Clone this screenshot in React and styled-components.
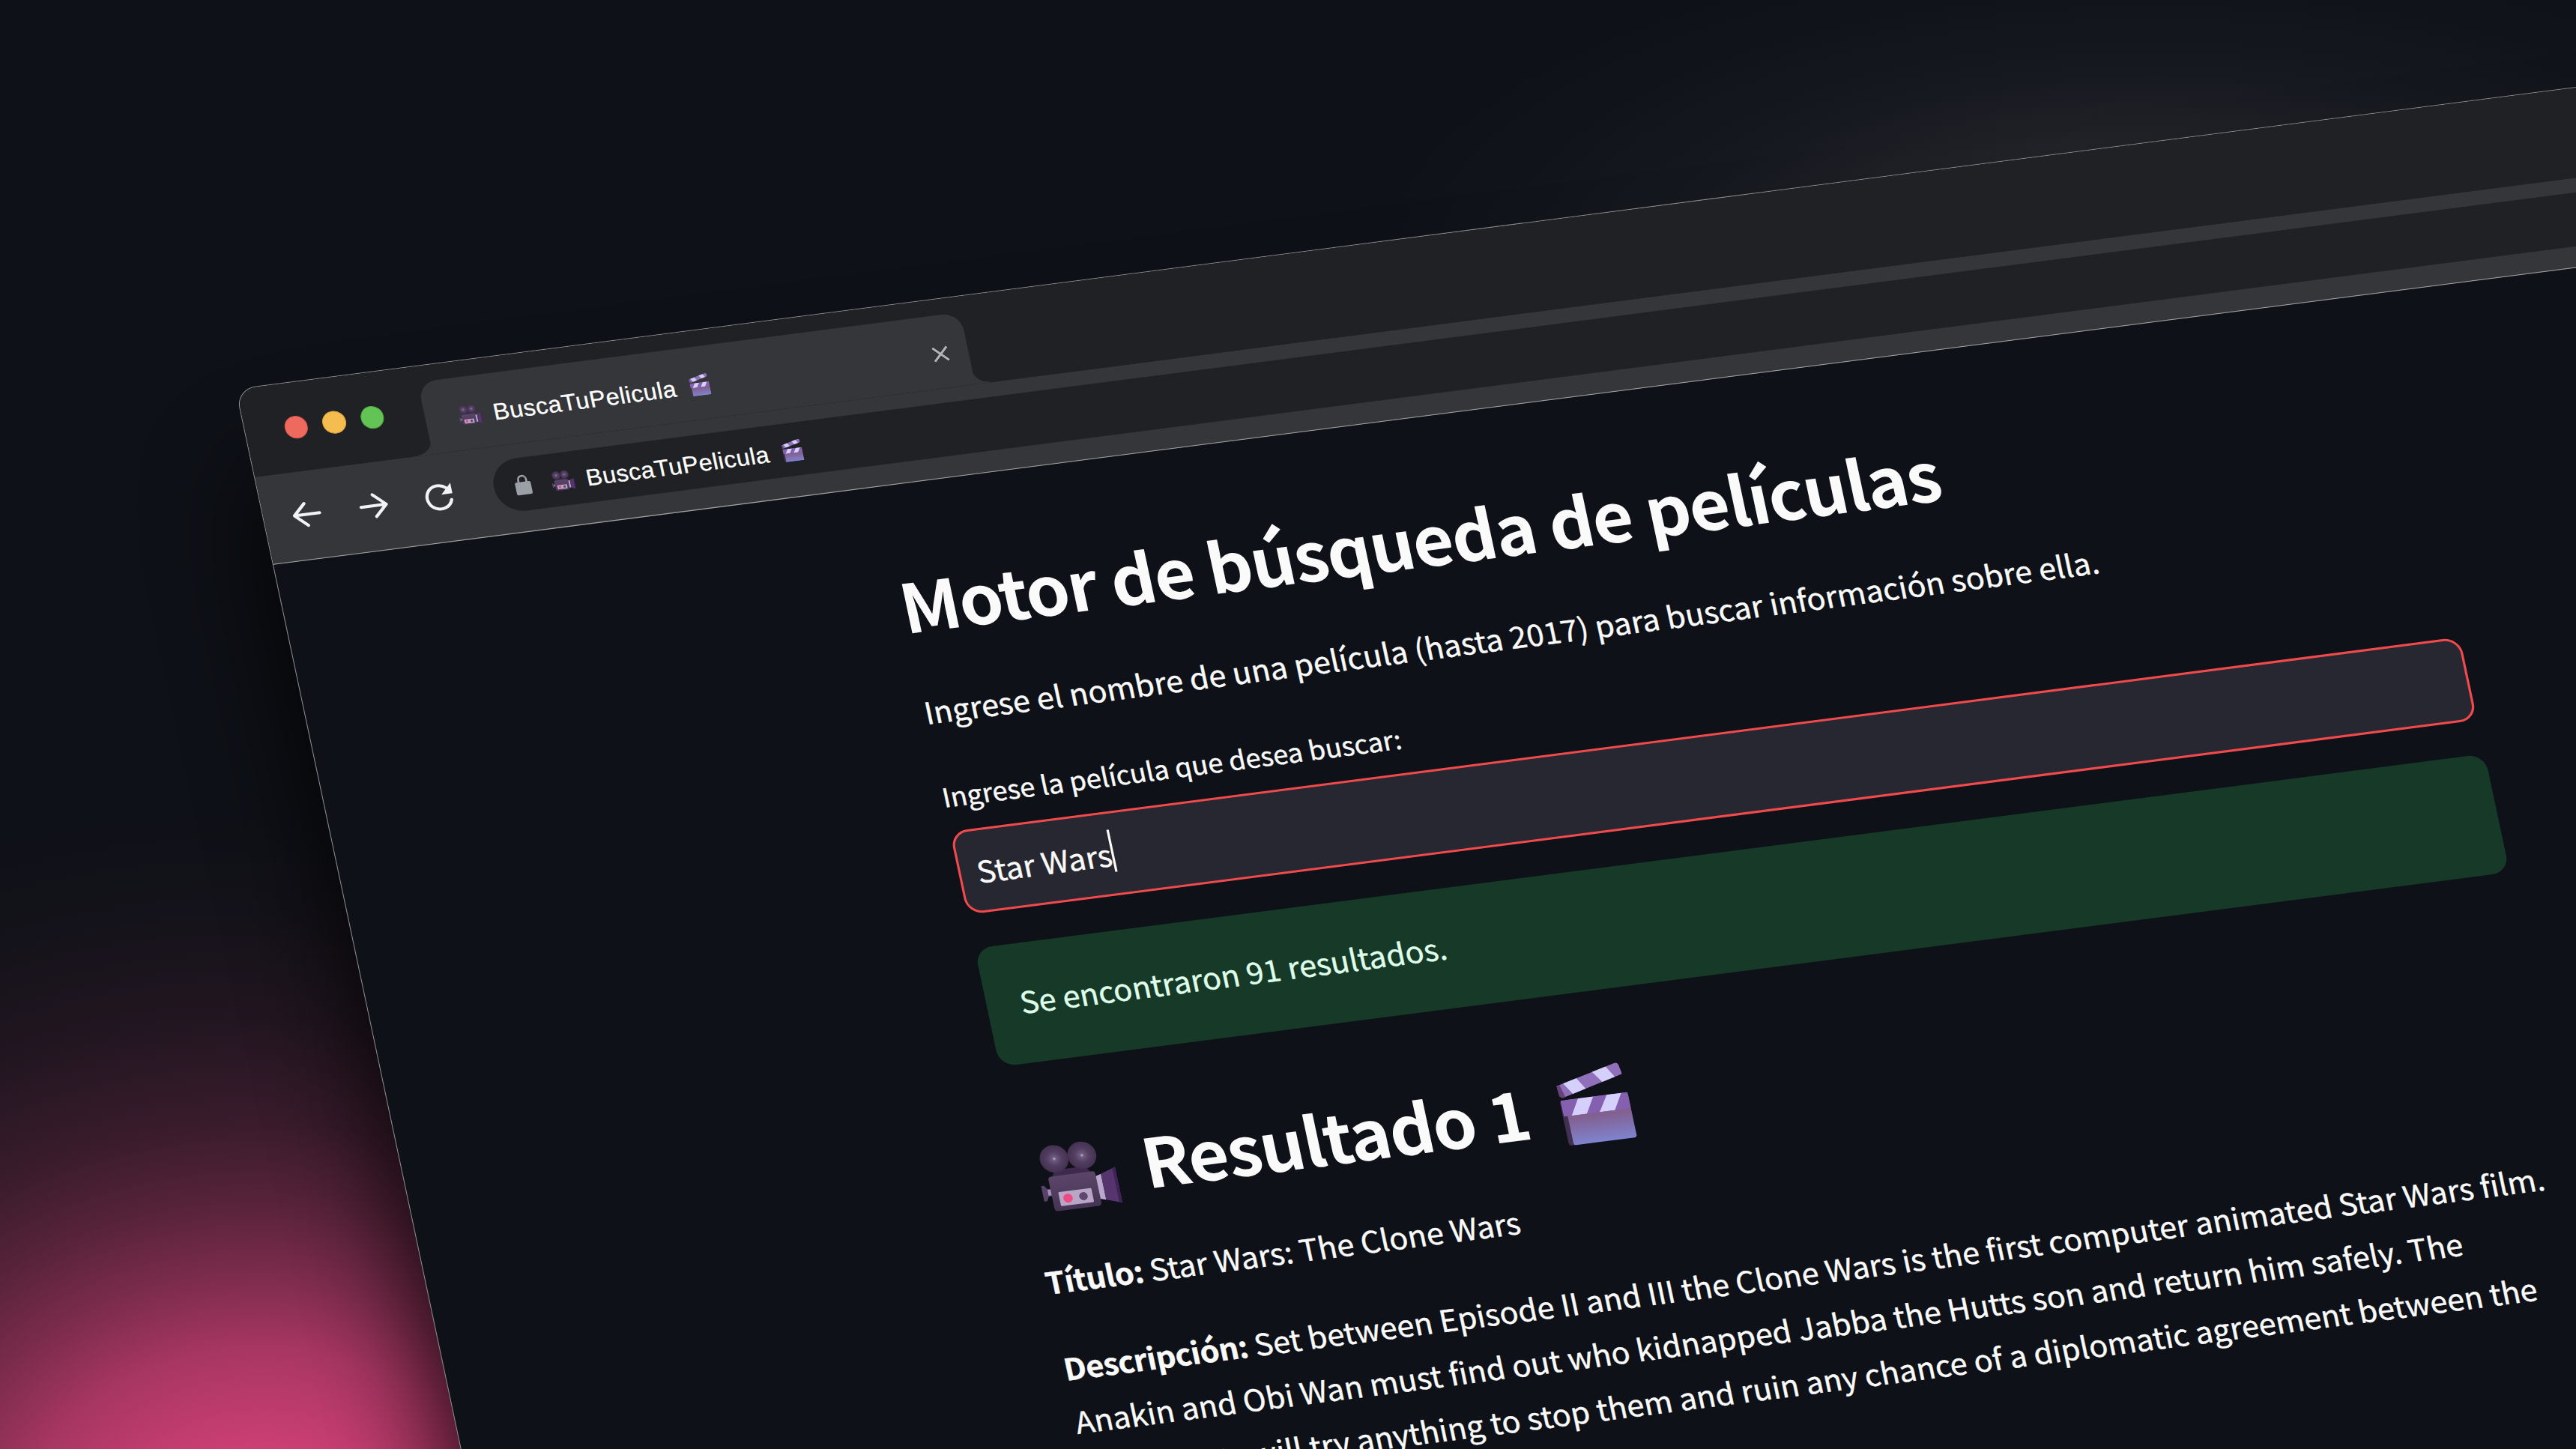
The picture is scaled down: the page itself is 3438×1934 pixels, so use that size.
import React from 'react';
import styled, { createGlobalStyle } from 'styled-components';

const K = 1.0464;
const TILT = `matrix(${K}, ${-0.129 * K}, 0.2125, 1, 0, 0)`;

const Global = createGlobalStyle`
  body { margin: 0; background: #0e1117; overflow: hidden; }
  * { box-sizing: border-box; }
`;

const Stage = styled.main`
  position: relative;
  width: 3438px;
  height: 1934px;
  overflow: hidden;
  background:
    radial-gradient(ellipse 1200px 1000px at 350px 2080px,
      rgba(232, 70, 130, 1) 0%, rgba(232, 70, 130, .88) 14%, rgba(232, 70, 130, .7) 28%,
      rgba(232, 70, 130, .5) 38%, rgba(232, 70, 130, .33) 48%, rgba(232, 70, 130, .2) 58%,
      rgba(232, 70, 130, .09) 72%, rgba(232, 70, 130, .03) 86%, rgba(232, 70, 130, 0) 100%),
    radial-gradient(ellipse 1050px 430px at 2870px 350px,
      rgba(50, 51, 56, .9) 0%, rgba(50, 51, 56, .55) 36%, rgba(46, 48, 56, .24) 60%,
      rgba(46, 48, 56, .08) 84%, rgba(46, 48, 56, 0) 100%),
    #0e1117;
`;

const Shade = styled.div`
  position: absolute;
  left: 345px;
  top: 640px;
  width: 3464px;
  height: 2300px;
  border-radius: 26px;
  background: #000;
  opacity: .95;
  filter: blur(76px);
  transform-origin: 0 0;
  transform: ${TILT};
`;

const Window = styled.section`
  position: absolute;
  left: 314px;
  top: 519.2px;
  width: 3464px;
  height: 1900px;
  display: flex;
  flex-direction: column;
  overflow: hidden;
  background: #0e1117;
  border-radius: 26px 26px 0 0;
  border: 1.5px solid #8b8c8e;
  transform-origin: 0 0;
  transform: ${TILT};
`;

const TabStrip = styled.header`
  display: flex;
  flex: 0 0 117px;
  padding: 21px 0 0 45.5px;
  background: #202124;
`;

const Lights = styled.div`
  display: flex;
  gap: 19px;
  width: 181px;
  padding: 23px 0 0 4px;
`;

const Light = styled.span`
  width: 29.6px;
  height: 29.6px;
  border-radius: 50%;
  border: 1px solid ${(p) => p.$edge};
  background: ${(p) => p.$color};
`;

const Tab = styled.div`
  position: relative;
  display: flex;
  align-items: center;
  width: 692px;
  height: 96px;
  padding: 5px 25px 0 42px;
  border-radius: 24px 24px 0 0;
  background: #35363a;
  &::before, &::after {
    content: '';
    position: absolute;
    bottom: 0;
    width: 18px;
    height: 20px;
  }
  &::before {
    right: 100%;
    background: radial-gradient(circle 19px at 0 0, #202124 98%, #35363a 100%);
  }
  &::after {
    left: 100%;
    background: radial-gradient(circle 19px at 100% 0, #202124 98%, #35363a 100%);
  }
`;

const PageName = styled.span`
  display: flex;
  align-items: center;
  font: 30.5px/36px "Liberation Sans", Arial, sans-serif;
  letter-spacing: .5px;
  color: #fff;
  white-space: nowrap;
  -webkit-text-stroke: .3px #fff;
`;

const SiteTitle = styled.span`
  margin: 0 15.5px 0 15.5px;
`;

const CloseIcon = styled.svg`
  width: 20px;
  height: 20px;
  margin-left: auto;
`;

const Toolbar = styled.nav`
  display: flex;
  flex: 0 0 117px;
  align-items: flex-start;
  padding-top: 19px;
  padding-left: 35px;
  background: #35363a;
  border-bottom: 1.5px solid #a5a6a3;
`;

const NavIcon = styled.svg`
  width: 40px;
  height: 40px;
  margin: 18px 44.5px 0 0;
  flex: none;
`;

const Address = styled.div`
  display: flex;
  align-items: center;
  flex: 1;
  height: 70px;
  margin-left: 5px;
  margin-right: 40px;
  padding: 3px 0 0 26px;
  border-radius: 35px;
  background: #202124;
`;

const LockIcon = styled.svg`
  width: 22px;
  height: 28px;
  margin: -2px 25px 0 0;
`;

const Content = styled.article`
  display: flex;
  flex-direction: column;
  width: 1925.5px;
  margin-left: 769px;
  padding-top: 98px;
  color: #fafafa;
  font-family: "Noto Sans CJK JP", "Noto Sans", sans-serif;
  font-size: 39.2px;
  white-space: nowrap;
  -webkit-text-stroke: .4px currentColor;
`;

const Heading = styled.h2`
  display: flex;
  align-items: center;
  gap: 35px;
  margin: ${(p) => p.$top}px 0 0 ${(p) => p.$indent}px;
  font-size: 88.5px;
  font-weight: 700;
  line-height: 118px;
  letter-spacing: -1.75px;
  -webkit-text-stroke: 0;
`;

const Text = styled.p`
  margin: ${(p) => p.$top}px 0 0;
  line-height: 71.4px;
`;

const Term = styled.b`
  letter-spacing: -.5px;
`;

const Label = styled.label`
  margin-top: 52px;
  font-size: 34.3px;
  line-height: 50px;
`;

const Field = styled.div`
  display: flex;
  align-items: center;
  height: 110.5px;
  margin-top: 22px;
  padding: 0 0 2px 20.5px;
  border: 3px solid #f04a4c;
  border-radius: 22px;
  background: #262730;
`;

const Caret = styled.i`
  width: 2.7px;
  height: 56px;
  margin-top: -6px;
  background: #fafafa;
`;

const Alert = styled.div`
  display: flex;
  align-items: center;
  height: 157.5px;
  margin-top: 45.3px;
  padding: 0 0 5px 42.5px;
  border-radius: 22px;
  background: #173928;
  color: #dffde9;
`;

const Emoji = styled.svg`
  width: ${(p) => p.$size}px;
  height: ${(p) => p.$size}px;
  margin-top: ${(p) => p.$drop || 0}px;
  flex: none;
`;

const Camera = ({ size, drop }) => (
  <Emoji $size={size} $drop={drop} viewBox="0 0 100 100">
    <defs>
      <linearGradient id="cam" x1="0" y1="0" x2="0" y2="1">
        <stop offset="0" stopColor="#5b4668" /><stop offset="1" stopColor="#453353" />
      </linearGradient>
      <radialGradient id="reel">
        <stop offset="0" stopColor="#c9bcd4" /><stop offset=".13" stopColor="#6f5b80" />
        <stop offset=".5" stopColor="#533f62" /><stop offset="1" stopColor="#443150" />
      </radialGradient>
    </defs>
    <path d="M22 40 L62 40 L70 52 L16 52Z" fill="#3d2a4c" />
    <ellipse cx="25" cy="25" rx="18.500" ry="18.500" fill="url(#reel)" />
    <ellipse cx="61" cy="25" rx="18.500" ry="18.500" fill="url(#reel)" />
    <path d="M1 59 L5 59 L8 64 L16 64 L16 74 L8 74 L5 80 L1 80Z" fill="#57426a" />
    <rect x="8" y="65" width="5" height="8" fill="#a48fb8" />
    <rect x="12" y="48" width="61" height="47" rx="4" fill="url(#cam)" />
    <rect x="21" y="70" width="43" height="19" rx="1.500" fill="#b9a5c6" />
    <circle cx="32" cy="79.500" r="6" fill="#ee4b84" />
    <circle cx="52" cy="79.500" r="5.500" fill="#5e486e" />
    <path d="M73 55 L80 53 L80 88 L73 86Z" fill="#b9a7cc" />
    <path d="M80 53 L100 46 L100 95 L80 88Z" fill="#56346e" />
    <path d="M96 48 L100 46 L100 95 L96 93Z" fill="#3f2356" />
  </Emoji>
);

const Clapper = ({ size, drop }) => (
  <Emoji $size={size} $drop={drop} viewBox="0 0 100 100">
    <defs>
      <linearGradient id="slate" x1="0" y1="0" x2="0" y2="1">
        <stop offset="0" stopColor="#82608f" /><stop offset=".4" stopColor="#82608f" /><stop offset="1" stopColor="#7f83d0" />
      </linearGradient>
      <clipPath id="arm"><path d="M7 21 L83 1 Q87 0 88 4 L90 16 L11 37 L8 34Z" /></clipPath>
      <clipPath id="bar"><rect x="8" y="40" width="84" height="21" /></clipPath>
    </defs>
    <rect x="7" y="40" width="12" height="59" rx="4" fill="#423050" />
    <g clipPath="url(#arm)">
      <rect width="100" height="45" fill="#9070bb" />
      <path d="M14 16 L32 12 L44 32 L28 38Z M52 6 L70 1 L82 21 L66 26Z" fill="#d4cffb" />
    </g>
    <path d="M7 21 L11 20 L15 36 L11 37 L8 34Z" fill="#654378" />
    <rect x="13" y="40" width="79" height="59" rx="3" fill="url(#slate)" />
    <g clipPath="url(#bar)">
      <rect x="8" y="40" width="84" height="21" fill="#8560b0" />
      <path d="M30 40 L49 40 L37 61 L18 61Z M66 40 L84 40 L72 61 L53 61Z" fill="#d4cffb" />
    </g>
  </Emoji>
);

const SiteName = () => (
  <PageName><Camera size={29} /><SiteTitle>BuscaTuPelicula</SiteTitle><Clapper size={29} drop={-1} /></PageName>
);

export default function App() {
  return (
    <Stage>
      <Global />
      <Shade />
      <Window>
        <TabStrip>
          <Lights>
            <Light $color="#ee6a5f" $edge="#d55549" />
            <Light $color="#f5bd4f" $edge="#d8a13c" />
            <Light $color="#61c454" $edge="#50a73f" />
          </Lights>
          <Tab>
            <SiteName />
            <CloseIcon viewBox="0 0 20 20" fill="none" stroke="#b4b5b7" strokeWidth="2.800">
              <path d="M1 1 L19 19 M19 1 L1 19" />
            </CloseIcon>
          </Tab>
        </TabStrip>
        <Toolbar>
          <NavIcon viewBox="0 0 40 40" fill="none" stroke="#f1f3f4" strokeWidth="4" strokeLinecap="round" strokeLinejoin="round">
            <path d="M36 20 H4 M19 5.500 L4 20 L19 34.500" />
          </NavIcon>
          <NavIcon viewBox="0 0 40 40" fill="none" stroke="#f1f3f4" strokeWidth="4" strokeLinecap="round" strokeLinejoin="round">
            <path d="M4 20 H36 M21 5.500 L36 20 L21 34.500" />
          </NavIcon>
          <NavIcon viewBox="0 0 40 40" fill="none" stroke="#f1f3f4" strokeWidth="4" strokeLinecap="round">
            <path d="M34.500 25 A15.500 15.500 0 1 1 30.500 9" />
            <path d="M37 3 V17 H23Z" fill="#f1f3f4" stroke="none" />
          </NavIcon>
          <Address>
            <LockIcon viewBox="0 0 22 28">
              <rect x="1" y="10" width="20" height="17" rx="2" fill="#9aa0a6" />
              <path d="M6 11 V7 a5 5 0 0 1 10 0 V11" fill="none" stroke="#9aa0a6" strokeWidth="2.500" />
            </LockIcon>
            <SiteName />
          </Address>
        </Toolbar>
        <Content>
          <Heading $top={0} $indent={-2}>Motor de búsqueda de películas</Heading>
          <Text $top={49}>Ingrese el nombre de una película (hasta 2017) para buscar información sobre ella.</Text>
          <Label>Ingrese la película que desea buscar:</Label>
          <Field>Star Wars<Caret /></Field>
          <Alert>Se encontraron 91 resultados.</Alert>
          <Heading $top={85.5} $indent={19}>
            <Camera size={98} drop={18} />
            <span>Resultado 1</span>
            <Clapper size={102} drop={7} />
          </Heading>
          <Text $top={49}><Term>Título:</Term> Star Wars: The Clone Wars</Text>
          <Text $top={43}>
            <Term>Descripción:</Term> Set between Episode II and III the Clone Wars is the first computer animated Star Wars film.<br />
            Anakin and Obi Wan must find out who kidnapped Jabba the Hutts son and return him safely. The<br />
            Separatists will try anything to stop them and ruin any chance of a diplomatic agreement between the
          </Text>
        </Content>
      </Window>
    </Stage>
  );
}
